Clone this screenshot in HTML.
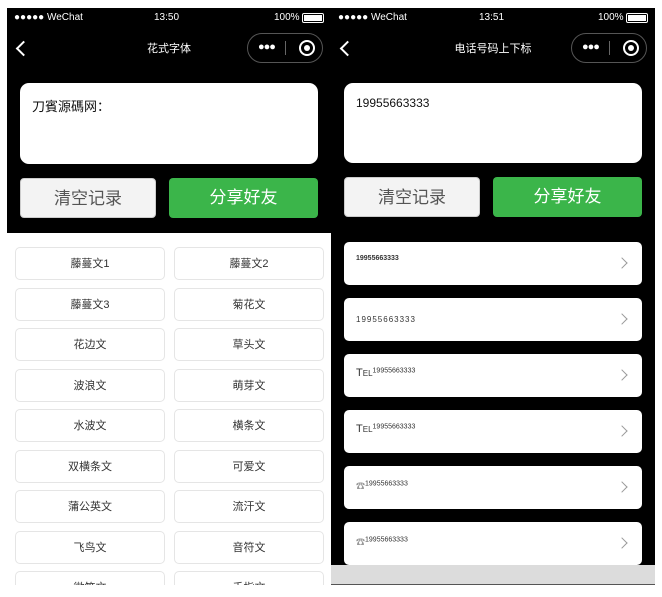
<!DOCTYPE html><html><head><meta charset="utf-8"><style>
*{margin:0;padding:0;box-sizing:border-box}
body{width:662px;height:597px;background:#fff;position:relative;overflow:hidden;font-family:"Liberation Sans","Noto Sans CJK SC",sans-serif}
.a{position:absolute}
.blk{background:#000}
.st{color:#fff;font-size:10px;top:12px}
.ttl{color:#fff;font-size:11px;top:40px;width:200px;text-align:center}
.cap{border:1px solid #555;border-radius:15px;width:76px;height:30px;top:33px}
.ta{background:#fff;border-radius:9px;font-size:13px;padding:13px 12px;color:#111}
.btn{border-radius:4px;font-size:17px;text-align:center;line-height:40px}
.g{background:#f3f3f3;color:#555;border:1px solid #ccc}
.gr{background:#3bb54a;color:#fff}
.cell{border:1px solid #e5e5e5;border-radius:5px;width:150px;height:33px;text-align:center;line-height:33px;font-size:11px;color:#333}
.li{background:#fff;border-radius:5px;left:344px;width:298px;height:43px;font-size:8px;color:#333;padding:15px 12px}
.ar{position:absolute;right:16px;top:17px;width:8px;height:8px;border-right:1.5px solid #999;border-top:1.5px solid #999;transform:rotate(45deg)}
</style></head><body>
<div class="a blk" style="left:7px;top:8px;width:324px;height:225px"></div>
<div class="a blk" style="left:331px;top:8px;width:324px;height:557px"></div>
<div class="a" style="left:331px;top:565px;width:324px;height:20px;background:#dcdcdc;border-bottom:1px solid #555"></div>

<!-- left -->
<div class="a st" style="left:14px">●●●●● WeChat</div>
<div class="a st" style="left:154px">13:50</div>
<div class="a st" style="left:274px">100%</div>
<div class="a" style="left:302px;top:13px;width:22px;height:10px;border:1px solid #fff;border-radius:2px;padding:1px"><div style="background:#fff;width:100%;height:100%"></div></div>
<div class="a" style="left:18px;top:43px;width:11px;height:11px;border-left:2px solid #fff;border-bottom:2px solid #fff;transform:rotate(45deg)"></div>
<div class="a ttl" style="left:69px">花式字体</div>
<div class="a cap" style="left:247px"><span class="a" style="left:10px;top:7px;color:#fff;font-size:11px;letter-spacing:-1px">●●●</span><span class="a" style="left:37px;top:7px;width:1px;height:14px;background:#666"></span><span class="a" style="left:51px;top:6px;width:16px;height:16px;border:2px solid #fff;border-radius:50%"><span class="a" style="left:3px;top:3px;width:6px;height:6px;background:#fff;border-radius:50%"></span></span></div>
<div class="a ta" style="left:20px;top:83px;width:298px;height:81px">刀賓源碼网：</div>
<div class="a btn g" style="left:20px;top:178px;width:136px;height:40px">清空记录</div>
<div class="a btn gr" style="left:169px;top:178px;width:149px;height:40px">分享好友</div>

<div class="a" style="left:0;top:0;width:331px;height:585px;overflow:hidden">
<div class="a cell" style="left:15px;top:247px">藤蔓文1</div><div class="a cell" style="left:174px;top:247px">藤蔓文2</div>
<div class="a cell" style="left:15px;top:288px">藤蔓文3</div><div class="a cell" style="left:174px;top:288px">菊花文</div>
<div class="a cell" style="left:15px;top:328px">花边文</div><div class="a cell" style="left:174px;top:328px">草头文</div>
<div class="a cell" style="left:15px;top:369px">波浪文</div><div class="a cell" style="left:174px;top:369px">萌芽文</div>
<div class="a cell" style="left:15px;top:409px">水波文</div><div class="a cell" style="left:174px;top:409px">横条文</div>
<div class="a cell" style="left:15px;top:450px">双横条文</div><div class="a cell" style="left:174px;top:450px">可爱文</div>
<div class="a cell" style="left:15px;top:490px">蒲公英文</div><div class="a cell" style="left:174px;top:490px">流汗文</div>
<div class="a cell" style="left:15px;top:531px">飞鸟文</div><div class="a cell" style="left:174px;top:531px">音符文</div>
<div class="a cell" style="left:15px;top:571px">微笑文</div><div class="a cell" style="left:174px;top:571px">手指文</div>
</div>

<!-- right -->
<div class="a st" style="left:338px">●●●●● WeChat</div>
<div class="a st" style="left:479px">13:51</div>
<div class="a st" style="left:598px">100%</div>
<div class="a" style="left:626px;top:13px;width:22px;height:10px;border:1px solid #fff;border-radius:2px;padding:1px"><div style="background:#fff;width:100%;height:100%"></div></div>
<div class="a" style="left:342px;top:43px;width:11px;height:11px;border-left:2px solid #fff;border-bottom:2px solid #fff;transform:rotate(45deg)"></div>
<div class="a ttl" style="left:393px">电话号码上下标</div>
<div class="a cap" style="left:571px"><span class="a" style="left:10px;top:7px;color:#fff;font-size:11px;letter-spacing:-1px">●●●</span><span class="a" style="left:37px;top:7px;width:1px;height:14px;background:#666"></span><span class="a" style="left:51px;top:6px;width:16px;height:16px;border:2px solid #fff;border-radius:50%"><span class="a" style="left:3px;top:3px;width:6px;height:6px;background:#fff;border-radius:50%"></span></span></div>
<div class="a ta" style="left:344px;top:83px;width:298px;height:80px;font-size:12px">19955663333</div>
<div class="a btn g" style="left:344px;top:177px;width:136px;height:40px">清空记录</div>
<div class="a btn gr" style="left:493px;top:177px;width:149px;height:40px">分享好友</div>

<div class="a li" style="top:242px;padding-top:13px;font-size:7px;font-weight:bold">19955663333<span class="ar"></span></div>
<div class="a li" style="top:298px;padding-top:17px;letter-spacing:1px">19955663333<span class="ar"></span></div>
<div class="a li" style="top:354px;padding-top:13px"><span style="font-size:11px">T<small style="font-size:8px">EL</small></span><sup style="font-size:7px">19955663333</sup><span class="ar"></span></div>
<div class="a li" style="top:410px;padding-top:13px"><span style="font-size:11px">T<small style="font-size:8px">EL</small></span><sup style="font-size:7px">19955663333</sup><span class="ar"></span></div>
<div class="a li" style="top:466px;padding-top:13px"><span style="color:#999;font-size:9px">☎</span><sup style="font-size:7px">19955663333</sup><span class="ar"></span></div>
<div class="a li" style="top:522px;padding-top:13px"><span style="color:#999;font-size:9px">☎</span><sup style="font-size:7px">19955663333</sup><span class="ar"></span></div>
</body></html>
